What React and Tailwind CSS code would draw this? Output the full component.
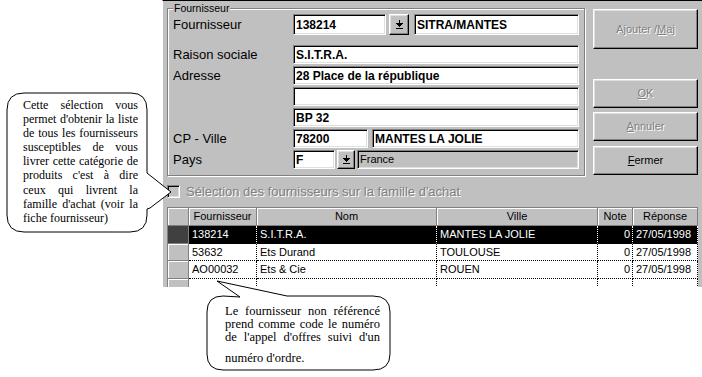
import React from "react";

const sunken =
  "border border-t-[#808080] border-l-[#808080] border-b-white border-r-white shadow-[inset_1px_1px_0_#000,inset_-1px_-1px_0_#dfdfdf]";
const raised =
  "border border-t-white border-l-white border-b-black border-r-black shadow-[inset_-1px_-1px_0_#808080,inset_1px_1px_0_#dfdfdf]";
const disabledText = "text-[#808080] [text-shadow:1px_1px_0_#fff]";

function DropIcon() {
  return (
    <svg width="7" height="9" viewBox="0 0 7 9" shapeRendering="crispEdges">
      <rect x="3" y="0" width="1" height="3" fill="#000" />
      <rect x="0" y="3" width="7" height="1" fill="#000" />
      <rect x="1" y="4" width="5" height="1" fill="#000" />
      <rect x="2" y="5" width="3" height="1" fill="#000" />
      <rect x="3" y="6" width="1" height="1" fill="#000" />
      <rect x="0" y="8" width="7" height="1" fill="#000" />
    </svg>
  );
}

function Field({ w, h = "h-[19px]", children, gray, plain }) {
  return (
    <div
      className={`${w} ${h} ${sunken} ${gray ? "bg-[#c0c0c0]" : "bg-white"} flex items-center pl-[2px] overflow-hidden whitespace-nowrap ${
        plain ? "text-[11px]" : "text-[12px] font-bold"
      }`}
    >
      {children}
    </div>
  );
}

function DropBtn({ w, h }) {
  return (
    <div className={`${w} ${h} ${raised} bg-[#c0c0c0] flex items-center justify-center`}>
      <DropIcon />
    </div>
  );
}

function Label({ children }) {
  return <div className="w-[120px] text-[13px] leading-[15px]">{children}</div>;
}

function Btn({ h, mt, disabled, children }) {
  return (
    <div
      className={`${h} ${mt} ${raised} bg-[#c0c0c0] flex items-center justify-center text-[11px] ${
        disabled ? disabledText : "text-black"
      }`}
    >
      {children}
    </div>
  );
}

const headCell =
  "bg-[#c0c0c0] border-r border-b border-r-[#808080] border-b-[#808080] shadow-[inset_1px_1px_0_#fff] flex items-center justify-center text-[11px]";

const cols = [
  { w: "w-[68px]", key: "f", label: "Fournisseur" },
  { w: "w-[180px]", key: "n", label: "Nom" },
  { w: "w-[161px]", key: "v", label: "Ville" },
  { w: "w-[35px]", key: "note", label: "Note", right: true },
  { w: "w-[65px]", key: "r", label: "Réponse" },
];

const rows = [
  { h: "h-[18px]", sel: true, f: "138214", n: "S.I.T.R.A.", v: "MANTES LA JOLIE", note: "0", r: "27/05/1998" },
  { h: "h-[17px]", f: "53632", n: "Ets Durand", v: "TOULOUSE", note: "0", r: "27/05/1998" },
  { h: "h-[18px]", f: "AO00032", n: "Ets & Cie", v: "ROUEN", note: "0", r: "27/05/1998" },
  { h: "h-[17px]", f: "", n: "", v: "", note: "", r: "" },
];

function Grid() {
  return (
    <div className="ml-[4px] mt-[9px] w-[531px] border-t border-l border-[#808080] bg-white">
      <div className="flex h-[18px]">
        <div className={`w-[21px] ${headCell}`} />
        {cols.map((c) => (
          <div key={c.key} className={`${c.w} ${headCell}`}>
            {c.label}
          </div>
        ))}
      </div>
      {rows.map((r, i) => (
        <div key={i} className={`flex ${r.h}`}>
          <div
            className={`w-[21px] border-r border-b border-r-[#808080] border-b-[#808080] ${
              r.sel ? "bg-[#404040]" : "bg-[#c0c0c0] shadow-[inset_1px_1px_0_#fff]"
            }`}
          />
          {cols.map((c) => (
            <div
              key={c.key}
              className={`${c.w} border-r border-b border-dotted flex items-center text-[11px] whitespace-nowrap overflow-hidden ${
                r.sel ? "bg-black text-white border-r-white border-b-black" : "bg-white text-black border-black"
              } ${c.right ? "justify-end pr-[2px]" : "pl-[3px]"}`}
            >
              {r[c.key]}
            </div>
          ))}
        </div>
      ))}
    </div>
  );
}

export default function App() {
  return (
    <div className="relative w-[702px] h-[377px] bg-white overflow-hidden font-['Liberation_Sans',Arial,sans-serif] text-black">
      <div className="ml-[162px] w-[540px] h-[287px] bg-[#c0c0c0] border-t border-t-black border-l border-l-white overflow-hidden flex flex-col">
        <div className="flex items-start">
          {/* Group box */}
          <div className="relative ml-[4px] mt-[7px] w-[418px] h-[168px] border border-[#808080] shadow-[inset_1px_1px_0_#fff,1px_1px_0_#fff]">
            <div className="absolute -top-[7px] left-[5px] bg-[#c0c0c0] px-[1px] text-[10.5px] leading-[12px]">
              Fournisseur
            </div>
            <div className="flex flex-col pt-[5px] pl-[5px]">
              <div className="flex items-center h-[21px]">
                <Label>Fournisseur</Label>
                <Field w="w-[93px]" h="h-[21px]">138214</Field>
                <div className="ml-[3px]">
                  <DropBtn w="w-[20px]" h="h-[21px]" />
                </div>
                <div className="ml-[5px]">
                  <Field w="w-[165px]" h="h-[21px]">SITRA/MANTES</Field>
                </div>
              </div>
              <div className="flex items-center mt-[10px]">
                <Label>Raison sociale</Label>
                <Field w="w-[286px]">S.I.T.R.A.</Field>
              </div>
              <div className="flex items-center mt-[2px]">
                <Label>Adresse</Label>
                <Field w="w-[286px]">28 Place de la république</Field>
              </div>
              <div className="flex items-center mt-[2px]">
                <Label></Label>
                <Field w="w-[286px]"></Field>
              </div>
              <div className="flex items-center mt-[2px]">
                <Label></Label>
                <Field w="w-[286px]">BP 32</Field>
              </div>
              <div className="flex items-center mt-[2px]">
                <Label>CP - Ville</Label>
                <Field w="w-[75px]">78200</Field>
                <div className="ml-[4px]">
                  <Field w="w-[207px]">MANTES LA JOLIE</Field>
                </div>
              </div>
              <div className="flex items-center mt-[2px]">
                <Label>Pays</Label>
                <Field w="w-[42px]">F</Field>
                <div className="ml-[2px]">
                  <DropBtn w="w-[18px]" h="h-[19px]" />
                </div>
                <div className="ml-[2px]">
                  <Field w="w-[222px]" gray plain>France</Field>
                </div>
              </div>
            </div>
          </div>
          {/* Buttons */}
          <div className="ml-[8px] mt-[8px] w-[105px] flex flex-col">
            <Btn h="h-[40px]" mt="mt-0" disabled>
              Ajouter / <span className="underline">M</span>aj
            </Btn>
            <Btn h="h-[29px]" mt="mt-[30px]" disabled>
              <span className="underline">O</span>K
            </Btn>
            <Btn h="h-[29px]" mt="mt-[4px]" disabled>
              <span className="underline">A</span>nnuler
            </Btn>
            <Btn h="h-[29px]" mt="mt-[5px]">
              <span className="underline">F</span>ermer
            </Btn>
          </div>
        </div>
        {/* Checkbox */}
        <div className="flex items-center mt-[9px] ml-[4px] h-[13px]">
          <div className={`w-[13px] h-[13px] bg-[#c0c0c0] ${sunken}`} />
          <div className={`ml-[6px] text-[13px] leading-[13px] ${disabledText}`}>
            Sélection des fournisseurs sur la famille d'achat
          </div>
        </div>
        <Grid />
      </div>

      {/* Callout shapes */}
      <svg className="absolute left-0 top-0 pointer-events-none" width="702" height="377" viewBox="0 0 702 377">
        <path
          d="M 24 93 L 131 93 Q 147 93 147 110 L 147 173 L 171 192 L 150 208 L 147 209 L 147 215 Q 147 232 130 232 L 24 232 Q 7 232 7 215 L 7 110 Q 7 93 24 93 Z"
          fill="#fff"
          stroke="#000"
          strokeWidth="1"
        />
        <path
          d="M 223 296 L 240 297 L 217 281 L 287 296 L 373 296 Q 390 296 390 312 L 390 354 Q 390 370 373 370 L 223 370 Q 207 370 207 354 L 207 312 Q 207 296 223 296 Z"
          fill="#fff"
          stroke="#000"
          strokeWidth="1"
        />
      </svg>

      {/* Callout 1 text */}
      <div className="absolute left-[23px] top-[98px] w-[115px] font-['Liberation_Serif','Times_New_Roman',serif] text-[12px] leading-[14.1px] text-black">
        {[
          "Cette sélection vous",
          "permet d'obtenir la liste",
          "de tous les fournisseurs",
          "susceptibles de vous",
          "livrer cette catégorie de",
          "produits c'est à dire",
          "ceux qui livrent la",
          "famille d'achat (voir la",
        ].map((t) => (
          <div key={t} className="text-justify [text-align-last:justify] whitespace-nowrap">
            {t}
          </div>
        ))}
        <div>fiche fournisseur)</div>
      </div>

      {/* Callout 2 text */}
      <div className="absolute left-[225px] top-[305px] w-[155px] font-['Liberation_Serif','Times_New_Roman',serif] text-[12.5px] leading-[13px] text-black">
        {["Le fournisseur non référencé", "prend comme code le numéro", "de l'appel d'offres suivi d'un"].map((t) => (
          <div key={t} className="text-justify [text-align-last:justify] whitespace-nowrap">
            {t}
          </div>
        ))}
        <div className="mt-[8px]">numéro d'ordre.</div>
      </div>
    </div>
  );
}
